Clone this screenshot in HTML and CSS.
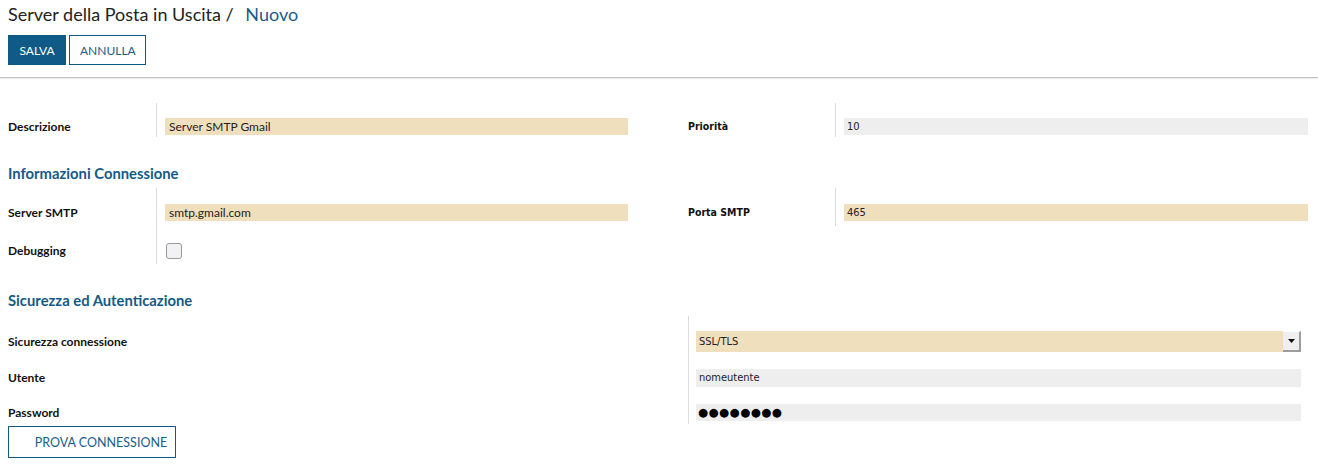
FILE: index.html
```html
<!DOCTYPE html>
<html>
<head>
<meta charset="utf-8">
<link rel="stylesheet" href="styles.css">
</head>
<body>
<div class="header">
  <div class="title">Server della Posta in Uscita / <span class="crumb">Nuovo</span></div>
  <div class="actions">
    <button class="btn primary">SALVA</button>
    <button class="btn outline">ANNULLA</button>
  </div>
</div>
<div class="form">
  <div class="grid g1">
    <div class="label">Descrizione</div>
    <div class="field"><div class="input tan">Server SMTP Gmail</div></div>
    <div class="spacer"></div>
    <div class="label cond">Priorità</div>
    <div class="field"><div class="input gray cond">10</div></div>
  </div>

  <h2 class="section h-1">Informazioni Connessione</h2>
  <div class="grid g2">
    <div class="label">Server SMTP</div>
    <div class="field"><div class="input tan">smtp.gmail.com</div></div>
    <div class="spacer"></div>
    <div class="label cond">Porta SMTP</div>
    <div class="field"><div class="input tan cond">465</div></div>
    <div class="label dbg">Debugging</div>
    <div class="field dbg"><span class="checkbox"></span></div>
    <div class="spacer"></div>
    <div></div>
    <div></div>
  </div>

  <h2 class="section h-2">Sicurezza ed Autenticazione</h2>
  <div class="grid g3">
    <div class="label r1">Sicurezza connessione</div>
    <div class="field r1"><div class="select cond"><span>SSL/TLS</span><span class="arrow"><svg width="7" height="4" viewBox="0 0 7 4"><path d="M0 0H7L3.5 4Z" fill="#111"/></svg></span></div></div>
    <div class="label r2">Utente</div>
    <div class="field r2"><div class="input gray cond tall">nomeutente</div></div>
    <div class="label r3">Password</div>
    <div class="field r3"><div class="input gray pw">●●●●●●●●</div></div>
  </div>
  <button class="btn outline test">PROVA CONNESSIONE</button>
</div>
</body>
</html>
```

FILE: styles.css
```css
* { box-sizing: border-box; }
body {
  margin: 0;
  font-family: Lato, "Open Sans", sans-serif;
  color: #1e1e1e;
  background: #fff;
}
.header {
  padding: 0 8px 12px;
  border-bottom: 1px solid #c4c4c4;
  box-shadow: 0 1px 0 #ececec;
}
.title {
  height: 28px;
  line-height: 28px;
  font-size: 18px;
  color: #222;
  margin-bottom: 7px;
}
.crumb { color: #1a5d88; margin-left: 7px; }
.actions { display: flex; gap: 3px; }
.btn {
  font-family: Lato, sans-serif;
  font-size: 12px;
  height: 30px;
  padding: 0 10px;
  border: 1px solid #0f5a86;
  background: #fff;
  color: #1a5d88;
  cursor: pointer;
}
.btn.primary { background: #0f5a86; color: #fff; width: 58px; }
.btn.outline { width: 77px; }
.form { padding: 0 8px; }
.grid {
  display: grid;
  grid-template-columns: 148px 472px 60px 147px 473px;
}
.g1 { margin-top: 25px; }
.label {
  font-size: 12px;
  font-weight: bold;
  color: #111;
  padding-top: 15px;
  line-height: 17px;
}
.label.cond, .input.cond, .select.cond {
  font-family: "DejaVu Sans Condensed", "DejaVu Sans", sans-serif;
}
.label.cond { font-size: 10.5px; }
.field {
  border-left: 1px solid #dcdcdc;
  padding: 15px 0 2px 8px;
}
.input {
  height: 17px;
  line-height: 17px;
  font-size: 12px;
  padding-left: 4px;
  color: #222;
}
.input.cond { font-size: 11px; padding-left: 3px; }
.tan { background: #f0dfbd; }
.gray { background: #eeeeee; }
.section {
  margin: 0;
  font-size: 14.8px;
  font-weight: bold;
  color: #145a86;
  line-height: 20px;
  height: 20px;
}
.h-1 { margin-top: 26px; margin-bottom: 5px; }
.h-2 { margin-top: 26px; margin-bottom: 6px; }
.g2 .label, .g2 .field { padding-top: 16px; }
.g2 .field { padding-bottom: 5px; }
.g2 .label.dbg { padding-top: 16px; line-height: 17px; }
.g2 .field.dbg { padding-top: 17px; padding-bottom: 5px; padding-left: 9px; display: flex; }
.checkbox {
  width: 16px;
  height: 16px;
  border: 1px solid #9a9a9a;
  border-radius: 3px;
  background: #f2f2f4;
}
.g3 { grid-template-columns: 680px 613px; }
.g3 .field { padding-left: 7px; padding-bottom: 0; }
.g3 .r1 { padding-top: 15px; height: 42px; }
.g3 .label.r1 { line-height: 21px; }
.g3 .r2 { padding-top: 11px; height: 34px; }
.g3 .label.r2 { line-height: 18px; }
.g3 .r3 { padding-top: 12px; height: 32px; }
.select {
  height: 21px;
  background: #f0dfbd;
  font-size: 11px;
  display: flex;
  align-items: center;
  justify-content: space-between;
  padding-left: 3px;
  color: #222;
}
.arrow {
  width: 18px;
  height: 21px;
  background: #efefef;
  border-right: 2px solid #9d9d9d;
  border-bottom: 2px solid #9d9d9d;
  border-top: 1px solid #fff;
  display: flex;
  align-items: center;
  justify-content: center;
}
.input.tall { height: 18px; line-height: 18px; }
.pw {
  font-family: "DejaVu Sans", sans-serif;
  font-size: 11.5px;
  letter-spacing: 0.5px;
  padding-left: 2px;
  color: #000;
}
.btn.test {
  margin-top: 2px;
  height: 32px;
  width: 168px;
  padding: 0 4px 0 22px;
  font-size: 12.5px;
}
```
